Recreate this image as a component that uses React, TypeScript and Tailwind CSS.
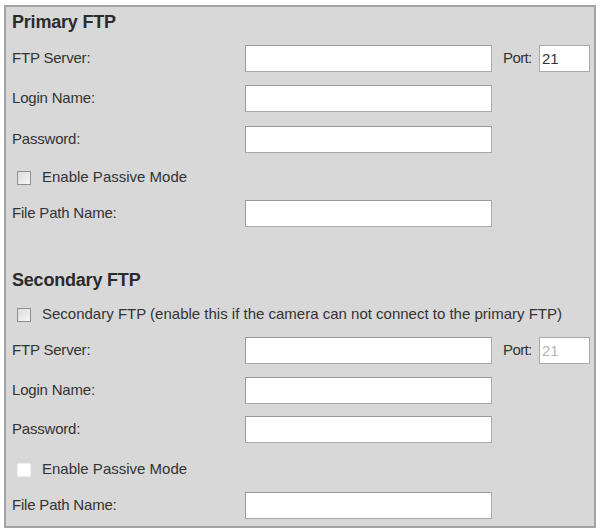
import React from "react";

const font = { fontFamily: '"Liberation Sans", Arial, sans-serif' };

function Field({ label, mt, port, portDisabled }: { label: string; mt: string; port?: boolean; portDisabled?: boolean }) {
  return (
    <div className={`flex items-center h-[27px] ${mt}`}>
      <div className="w-[233px] text-[15px] text-[#333] tracking-[-0.2px]">{label}</div>
      <div className="w-[247px] h-[27px] bg-white border border-[#a9a9a9] border-t-[#9a9a9a] border-l-[#9a9a9a]" />
      {port && (
        <div className="flex items-center ml-[11px]">
          <span className="text-[15px] text-[#333] tracking-[-0.6px] w-[36px]">Port:</span>
          <div className={`w-[51px] h-[27px] bg-white border border-[#a9a9a9] text-[15px] leading-[25px] pl-[2px] ${portDisabled ? "text-[#b5b5b5]" : "text-[#333]"}`}>21</div>
        </div>
      )}
    </div>
  );
}

function Check({ label, mt, disabled }: { label: string; mt: string; disabled?: boolean }) {
  return (
    <div className={`flex items-center h-[27px] ${mt}`}>
      <div
        className={`ml-[5px] w-[14px] h-[14px] ${disabled ? "bg-white border border-[#eeeeee]" : "bg-gradient-to-br from-[#dcdcdc] to-[#f7f7f7] border border-[#8f8f8f]"}`}
      />
      <span className="ml-[11px] text-[15px] text-[#333]">{label}</span>
    </div>
  );
}

export default function App() {
  return (
    <div className="w-[601px] h-[531px] bg-white pt-[5px] pl-[4px]" style={font}>
      <div className="w-[592px] h-[523px] bg-[#d8d8d8] border-2 border-[#a3a3a3] pl-[6px] flex flex-col">
        <div className="h-[30px] leading-[30px] text-[18px] font-bold text-[#2b2b2b] tracking-[-0.2px]">Primary FTP</div>
        <Field label="FTP Server:" mt="mt-[8px]" port />
        <Field label="Login Name:" mt="mt-[13px]" />
        <Field label="Password:" mt="mt-[14px]" />
        <Check label="Enable Passive Mode" mt="mt-[11px]" />
        <Field label="File Path Name:" mt="mt-[9px]" />
        <div className="mt-[38px] h-[30px] leading-[30px] text-[18px] font-bold text-[#2b2b2b] tracking-[-0.2px]">Secondary FTP</div>
        <Check label="Secondary FTP (enable this if the camera can not connect to the primary FTP)" mt="mt-[6px]" />
        <Field label="FTP Server:" mt="mt-[9px]" port portDisabled />
        <Field label="Login Name:" mt="mt-[13px]" />
        <Field label="Password:" mt="mt-[12px]" />
        <Check label="Enable Passive Mode" mt="mt-[13px]" disabled />
        <Field label="File Path Name:" mt="mt-[9px]" />
      </div>
    </div>
  );
}
